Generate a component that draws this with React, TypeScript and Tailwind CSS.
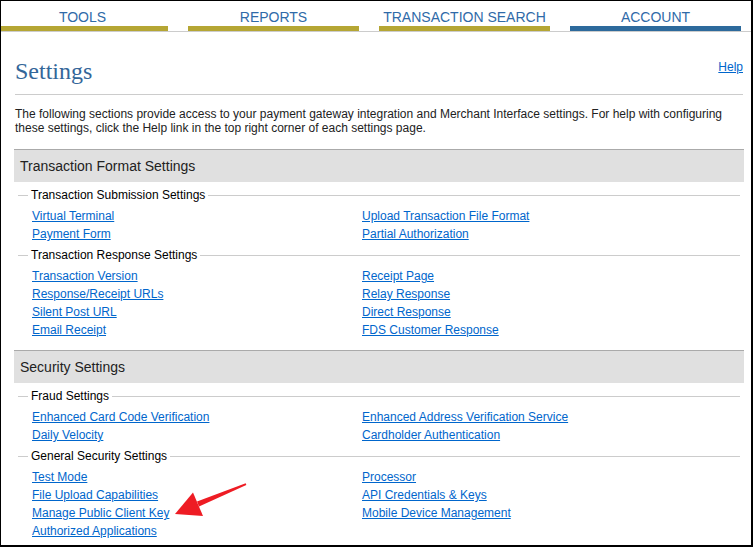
import React from "react";

type Group = { legend: string; left: string[]; right: string[] };
type Section = { title: string; groups: Group[] };

const tabs = [
  { label: "TOOLS", bar: "bg-[#b5a634]" },
  { label: "REPORTS", bar: "bg-[#b5a634]" },
  { label: "TRANSACTION SEARCH", bar: "bg-[#b5a634]" },
  { label: "ACCOUNT", bar: "bg-[#2d6a9c]" },
];

const sections: Section[] = [
  {
    title: "Transaction Format Settings",
    groups: [
      {
        legend: "Transaction Submission Settings",
        left: ["Virtual Terminal", "Payment Form"],
        right: ["Upload Transaction File Format", "Partial Authorization"],
      },
      {
        legend: "Transaction Response Settings",
        left: ["Transaction Version", "Response/Receipt URLs", "Silent Post URL", "Email Receipt"],
        right: ["Receipt Page", "Relay Response", "Direct Response", "FDS Customer Response"],
      },
    ],
  },
  {
    title: "Security Settings",
    groups: [
      {
        legend: "Fraud Settings",
        left: ["Enhanced Card Code Verification", "Daily Velocity"],
        right: ["Enhanced Address Verification Service", "Cardholder Authentication"],
      },
      {
        legend: "General Security Settings",
        left: ["Test Mode", "File Upload Capabilities", "Manage Public Client Key", "Authorized Applications"],
        right: ["Processor", "API Credentials & Keys", "Mobile Device Management"],
      },
    ],
  },
];

const LinkList = ({ items }: { items: string[] }) => (
  <div className="flex flex-col">
    {items.map((item) => (
      <a key={item} href="#" className="h-[18px] leading-[18px] text-[#0066cc] underline w-fit">
        {item}
      </a>
    ))}
  </div>
);

const SettingsGroup = ({ group }: { group: Group }) => (
  <div>
    <div className="mt-[2px] mx-[4px] h-5 flex items-center">
      <div className="w-[10px] h-px bg-[#cccccc]" />
      <span className="px-[3px] text-black">{group.legend}</span>
      <div className="flex-1 h-px bg-[#cccccc]" />
    </div>
    <div className="mt-[2px] pl-[18px] grid grid-cols-[330px_1fr]">
      <LinkList items={group.left} />
      <LinkList items={group.right} />
    </div>
  </div>
);

export default function App() {
  return (
    <div className="w-[754px] h-[548px] overflow-hidden bg-white" style={{ fontFamily: '"Liberation Sans", Arial, sans-serif' }}>
      <div className="relative -ml-px -mt-px w-[754px] h-[548px] border-2 border-black overflow-hidden text-[12px]">
        {/* top nav */}
        <div className="border-b border-[#cccccc]">
          <div className="flex gap-5 ml-[-4px]">
            {tabs.map((t) => (
              <div key={t.label} className="w-[171px] shrink-0 flex flex-col items-center pt-[7px]">
                <span className="text-[14px] leading-[18px] text-[#2f6aa8]">{t.label}</span>
                <div className={`w-full h-[5px] ${t.bar}`} />
              </div>
            ))}
          </div>
        </div>

        <div className="pl-[13px] pr-[7px]">
          <div className="mt-[25px] mx-px pb-[9px] border-b border-[#cccccc] flex justify-between items-start">
            <h1 className="text-[24px] leading-[28px] text-[#336699]" style={{ fontFamily: '"Liberation Serif", "Times New Roman", serif' }}>
              Settings
            </h1>
            <a href="#" className="mt-[3px] leading-[14px] text-[#0066cc] underline">Help</a>
          </div>

          <p className="mt-[12px] mx-px leading-[14px] text-[#222222]">
            The following sections provide access to your payment gateway integration and Merchant Interface settings. For help with configuring these settings, click the Help link in the top right corner of each settings page.
          </p>

          <div className="mt-[14px]">
            {sections.map((s) => (
              <div key={s.title} className="mb-[11px]">
                <div className="h-[33px] border-t border-[#aaaaaa] bg-[#e0e0e0] flex items-center pl-[6px] text-[14px] text-[#222222]">
                  {s.title}
                </div>
                <div className="pt-px">
                  {s.groups.map((g) => (
                    <SettingsGroup key={g.legend} group={g} />
                  ))}
                </div>
              </div>
            ))}
          </div>
        </div>

        {/* annotation arrow */}
        <svg className="absolute left-0 top-0 pointer-events-none" width="754" height="548">
          <polygon points="198,505.5 196,500.5 244.7,482.3 245.3,484" fill="#ee1c24" />
          <polygon points="174,513 192,491.5 202,515" fill="#ee1c24" />
        </svg>
      </div>
    </div>
  );
}
